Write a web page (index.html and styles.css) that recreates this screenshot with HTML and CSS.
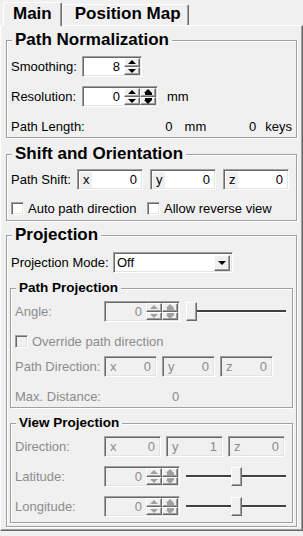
FILE: index.html
```html
<!DOCTYPE html>
<html lang="en">
<head>
    <meta charset="UTF-8">
    <meta name="viewport" content="width=device-width, initial-scale=1.0">
    <title>Path Settings</title>
    <link rel="stylesheet" href="styles.css">
</head>
<body>
    <!-- tab strip -->
    <div class="tabs">
        <div class="tab active">Main</div>
        <div class="tab">Position Map</div>
    </div>

    <div class="panel">
        <!-- Path Normalization -->
        <fieldset class="group g1">
            <legend>Path Normalization</legend>
            <div class="row first">
                <span class="lbl w71">Smoothing:</span>
                <div class="spin">
                    <span class="val">8</span>
                    <span class="btns"><span class="sbtn up"></span><span class="sbtn dn"></span></span>
                </div>
            </div>
            <div class="row">
                <span class="lbl w71">Resolution:</span>
                <div class="spin wide">
                    <span class="val">0</span>
                    <span class="btns"><span class="sbtn up"></span><span class="sbtn dn"></span></span>
                    <span class="btns fast"><span class="sbtn fup"></span><span class="sbtn fdn"></span></span>
                </div>
                <span class="unit">mm</span>
            </div>
            <div class="row">
                <span class="lbl w150">Path Length:</span>
                <span class="num n1">0</span>
                <span class="unit u2">mm</span>
                <span class="num n2">0</span>
                <span class="unit u3">keys</span>
            </div>
        </fieldset>

        <!-- Shift and Orientation -->
        <fieldset class="group g2">
            <legend>Shift and Orientation</legend>
            <div class="row first">
                <span class="lbl w66">Path Shift:</span>
                <div class="xyz shift">
                    <div class="field"><span class="ax">x</span><span class="v">0</span></div>
                    <div class="field"><span class="ax">y</span><span class="v">0</span></div>
                    <div class="field"><span class="ax">z</span><span class="v">0</span></div>
                </div>
            </div>
            <div class="row checks">
                <label class="check c1"><span class="cb"></span>Auto path direction</label>
                <label class="check"><span class="cb"></span>Allow reverse view</label>
            </div>
        </fieldset>

        <!-- Projection -->
        <fieldset class="group g3">
            <legend>Projection</legend>
            <div class="row first mode">
                <span class="lbl w102">Projection Mode:</span>
                <div class="combo">
                    <span class="combo-text">Off</span>
                    <span class="drop"></span>
                </div>
            </div>

            <fieldset class="sub pp disabled">
                <legend>Path Projection</legend>
                <div class="row first">
                    <span class="lbl w89">Angle:</span>
                    <div class="spin wide">
                        <span class="val">0</span>
                        <span class="btns"><span class="sbtn up"></span><span class="sbtn dn"></span></span>
                        <span class="btns fast"><span class="sbtn fup"></span><span class="sbtn fdn"></span></span>
                    </div>
                    <div class="slider">
                        <span class="thumb"></span>
                        <span class="track"></span>
                    </div>
                </div>
                <div class="row r-over">
                    <label class="check"><span class="cb"></span>Override path direction</label>
                </div>
                <div class="row r-dir">
                    <span class="lbl w89">Path Direction:</span>
                    <div class="xyz pdir">
                        <div class="field"><span class="ax">x</span><span class="v">0</span></div>
                        <div class="field"><span class="ax">y</span><span class="v">0</span></div>
                        <div class="field"><span class="ax">z</span><span class="v">0</span></div>
                    </div>
                </div>
                <div class="row">
                    <span class="lbl w157">Max. Distance:</span>
                    <span>0</span>
                </div>
            </fieldset>

            <fieldset class="sub vp disabled">
                <legend>View Projection</legend>
                <div class="row first">
                    <span class="lbl w89">Direction:</span>
                    <div class="xyz vdir">
                        <div class="field"><span class="ax">x</span><span class="v">0</span></div>
                        <div class="field"><span class="ax">y</span><span class="v">1</span></div>
                        <div class="field"><span class="ax">z</span><span class="v">0</span></div>
                    </div>
                </div>
                <div class="row">
                    <span class="lbl w89">Latitude:</span>
                    <div class="spin wide">
                        <span class="val">0</span>
                        <span class="btns"><span class="sbtn up"></span><span class="sbtn dn"></span></span>
                        <span class="btns fast"><span class="sbtn fup"></span><span class="sbtn fdn"></span></span>
                    </div>
                    <div class="slider">
                        <span class="track left"></span>
                        <span class="thumb"></span>
                        <span class="track"></span>
                    </div>
                </div>
                <div class="row">
                    <span class="lbl w89">Longitude:</span>
                    <div class="spin wide">
                        <span class="val">0</span>
                        <span class="btns"><span class="sbtn up"></span><span class="sbtn dn"></span></span>
                        <span class="btns fast"><span class="sbtn fup"></span><span class="sbtn fdn"></span></span>
                    </div>
                    <div class="slider">
                        <span class="track left"></span>
                        <span class="thumb"></span>
                        <span class="track"></span>
                    </div>
                </div>
            </fieldset>
        </fieldset>
    </div>
</body>
</html>
```

FILE: styles.css
```css
/* base */
body {
    margin: 0;
    width: 303px;
    height: 536px;
    overflow: hidden;
    background-color: #f0f0f0;
    font-family: "Liberation Sans", Arial, sans-serif;
    font-size: 13px;
    color: #000;
}

/* tabs */
.tabs {
    display: flex;
    align-items: flex-end;
    height: 25px;
    padding-left: 3px;
}
.tab {
    box-sizing: border-box;
    height: 21px;
    padding: 0 7px 0 12px;
    font-size: 17px;
    font-weight: bold;
    line-height: 18px;
    background-color: #f0f0f0;
    border-top: 1px solid #fff;
    border-left: 1px solid #fff;
    border-right: 1px solid #696969;
    box-shadow: inset -1px 0 #a0a0a0;
    border-radius: 2px 2px 0 0;
}
.tab.active {
    height: 24px;
    margin-bottom: -1px;
    padding: 2px 9px 0 9px;
    position: relative;
    z-index: 1;
}

/* panel */
.panel {
    box-sizing: border-box;
    height: 506px;
    padding: 5px 5px 0 5px;
    border-top: 1px solid #fff;
    border-left: 1px solid #fff;
    border-right: 1px solid #696969;
    border-bottom: 1px solid #696969;
    box-shadow: inset -1px -1px #a0a0a0;
}

/* etched group boxes */
fieldset {
    margin: 0;
    min-width: 0;
    border: 1px solid #a0a0a0;
    box-shadow: inset 1px 1px #fff, 1px 1px #fff;
}
legend {
    padding: 0 3px;
    margin-left: 1px;
    font-size: 17px;
    font-weight: bold;
    line-height: 18px;
    background-color: #f0f0f0;
}
.group {
    padding: 0 4px 0 4px;
}
.g1 { padding-bottom: 0; }
.g2 { margin-top: 7px; padding-bottom: 1px; }
.g3 { margin-top: 5px; padding: 0 3px 3px 3px; }
.g3 > legend { margin-left: 2px; }

.sub {
    padding: 0 4px 0 4px;
}
.sub legend {
    font-size: 13.5px;
    line-height: 16px;
}
.pp { margin-top: 7px; padding-bottom: 0; }
.vp { margin-top: 7px; padding-bottom: 5px; }

/* rows */
.row {
    display: flex;
    align-items: center;
    height: 21px;
    margin-top: 9px;
    white-space: nowrap;
}
.g1 .row.first { margin-top: 7px; }
.g2 .row.first { margin-top: 6px; }
.g2 .row.checks { margin-top: 8px; }
.g3 .row.mode { margin-top: 8px; padding-left: 1px; }
.sub .row.first { margin-top: 5px; }
.r-dir { margin-top: 4px; }

.lbl { flex: none; }
.w66 { width: 66px; }
.w71 { width: 71px; }
.w89 { width: 89px; }
.w102 { width: 102px; }
.w150 { width: 150px; }
.w157 { width: 157px; }

.num { text-align: right; }
.n1 { width: 12px; }
.n2 { width: 52px; }
.unit { margin-left: 9px; }
.u2 { margin-left: 12px; }

/* sunken edit look */
.spin, .field, .combo, .cb {
    box-sizing: border-box;
    border: 1px solid;
    border-color: #a0a0a0 #fff #fff #a0a0a0;
    box-shadow: inset 1px 1px #696969, inset -1px -1px #e3e3e3;
}

/* spin boxes */
.spin {
    display: flex;
    width: 60px;
    height: 21px;
    padding: 1px;
    background-color: #fff;
}
.spin.wide { width: 76px; }
.spin .val {
    flex: 1;
    text-align: right;
    padding-right: 4px;
    line-height: 17px;
}
.btns {
    display: flex;
    flex-direction: column;
    width: 16px;
}
.sbtn {
    flex: 1;
    box-sizing: border-box;
    display: flex;
    flex-direction: column;
    align-items: center;
    justify-content: center;
    gap: 1px;
    background-color: #f0f0f0;
    border-top: 1px solid #fff;
    border-left: 1px solid #fff;
    border-right: 1px solid #696969;
    border-bottom: 1px solid #696969;
    box-shadow: inset -1px -1px #a0a0a0;
}
.up::before, .fup::before {
    content: "";
    border-style: solid;
    border-color: transparent;
    border-width: 0 4px 4px 4px;
    border-bottom-color: #000;
}
.dn::before, .fdn::after {
    content: "";
    border-style: solid;
    border-color: transparent;
    border-width: 4px 4px 0 4px;
    border-top-color: #000;
}
.fup::after, .fdn::before {
    content: "";
    width: 7px;
    height: 2px;
    background-color: #000;
}
.fast .sbtn { gap: 0; }

/* xyz fields */
.xyz {
    display: flex;
}
.field {
    display: flex;
    height: 21px;
    padding: 2px 1px 1px 2px;
    background-color: #fff;
}
.field .ax {
    width: 9px;
    padding-left: 3px;
    line-height: 16px;
    background-color: #f0f0f0;
}
.field .v {
    flex: 1;
    text-align: right;
    padding-right: 4px;
    line-height: 16px;
}
.shift { gap: 7px; }
.shift .field { width: 66px; }
.pdir { gap: 5px; }
.pdir .field { width: 53px; }
.vdir { gap: 5px; }
.vdir .field { width: 57px; }

/* checkboxes */
.check {
    display: flex;
    align-items: center;
}
.check.c1 { width: 136px; }
.cb {
    width: 13px;
    height: 13px;
    margin-right: 4px;
    background-color: #fff;
}

/* combo */
.combo {
    display: flex;
    align-items: center;
    width: 120px;
    height: 21px;
    padding: 2px 2px 2px 3px;
    background-color: #fff;
}
.combo-text { flex: 1; }
.drop {
    box-sizing: border-box;
    display: flex;
    align-items: center;
    justify-content: center;
    width: 16px;
    height: 16px;
    background-color: #f0f0f0;
    border-top: 1px solid #fff;
    border-left: 1px solid #fff;
    border-right: 1px solid #696969;
    border-bottom: 1px solid #696969;
    box-shadow: inset -1px -1px #a0a0a0;
}
.drop::before {
    content: "";
    border-style: solid;
    border-color: transparent;
    border-width: 4px 4px 0 4px;
    border-top-color: #000;
}

/* sliders */
.slider {
    display: flex;
    align-items: center;
    width: 100px;
    height: 21px;
    margin-left: 6px;
}
.track {
    flex: 1;
    height: 2px;
    background-color: #404040;
    border-bottom: 1px solid #fff;
}
.track.left { flex: 0 0 45px; }
.thumb {
    box-sizing: border-box;
    width: 11px;
    height: 19px;
    background-color: #f0f0f0;
    border-top: 1px solid #fff;
    border-left: 1px solid #fff;
    border-right: 1px solid #696969;
    border-bottom: 1px solid #696969;
    box-shadow: inset -1px -1px #a0a0a0;
}

/* disabled sections */
.disabled .row { color: #8c8c8c; }
.disabled .spin,
.disabled .field,
.disabled .cb { background-color: #f0f0f0; }
.disabled .up::before,
.disabled .fup::before { border-bottom-color: #a0a0a0; }
.disabled .dn::before,
.disabled .fdn::after { border-top-color: #a0a0a0; }
.disabled .fup::after,
.disabled .fdn::before { background-color: #a0a0a0; }
```
